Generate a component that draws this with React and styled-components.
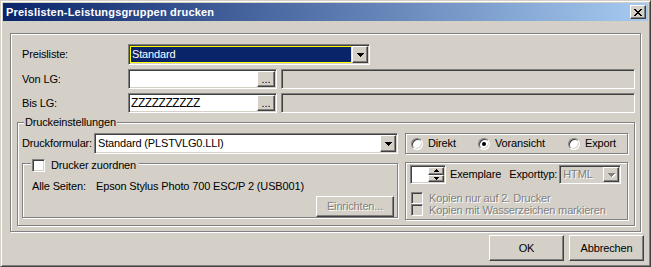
import React from "react";
import styled, { css, createGlobalStyle } from "styled-components";

const face = "#d4d0c8";

const GlobalStyle = createGlobalStyle`
  html, body { margin: 0; padding: 0; background: ${face}; }
  * { box-sizing: border-box; }
`;

// win2000 bevels
const sunken = css`
  border: 1px solid;
  border-color: #808080 #fff #fff #808080;
  box-shadow: inset 1px 1px #404040, inset -1px -1px ${face};
`;
const raised = css`
  border: 1px solid;
  border-color: #fff #404040 #404040 #fff;
  box-shadow: inset -1px -1px #808080, inset 1px 1px ${face};
`;
const etched = css`
  border: 1px solid #808080;
  box-shadow: inset 1px 1px #fff, 1px 1px #fff;
`;
const disabledText = css`
  color: #808080;
  text-shadow: 1px 1px 0 #fff;
`;

const Window = styled.div`
  width: 651px;
  height: 267px;
  display: flex;
  flex-direction: column;
  background: ${face};
  border: 1px solid;
  border-color: ${face} #404040 #404040 ${face};
  box-shadow: inset 1px 1px #fff, inset -1px -1px #808080;
  padding: 2px;
  font-family: "Liberation Sans", Arial, sans-serif;
  font-size: 11px;
  line-height: 13px;
  letter-spacing: -0.15px;
  color: #000;
`;

const TitleBar = styled.div`
  height: 18px;
  display: flex;
  align-items: center;
  justify-content: space-between;
  padding: 0 2px 0 3px;
  background: linear-gradient(90deg, #0a246a, #a6caf0);
`;

const Title = styled.span`
  color: #fff;
  font-weight: bold;
  letter-spacing: 0.2px;
`;

const CloseButton = styled.div`
  ${raised};
  width: 16px;
  height: 14px;
  display: flex;
  align-items: center;
  justify-content: center;
  background: ${face};
`;

const Client = styled.div`
  flex: 1;
  display: flex;
  flex-direction: column;
  padding: 12px 7px 3px 7px;
  min-height: 0;
`;

const OuterGroup = styled.div`
  ${etched};
  flex: 1;
  display: flex;
  flex-direction: column;
  padding: 10px 5px 5px 6px;
`;

const FieldRow = styled.div`
  display: flex;
  align-items: center;
  height: ${(p) => p.$h}px;
  padding-left: 5px;
  margin-bottom: 4px;
`;

const FieldLabel = styled.span`
  width: ${(p) => p.$w}px;
  flex-shrink: 0;
  white-space: nowrap;
`;

const Combo = styled.div`
  ${sunken};
  display: flex;
  width: ${(p) => p.$w}px;
  height: ${(p) => p.$h || 21}px;
  margin-left: ${(p) => p.$ml || 0}px;
  padding: 1px;
  background: ${(p) => (p.$disabled ? face : "#fff")};
  flex-shrink: 0;
`;

const ComboValue = styled.div`
  flex: 1;
  min-width: 0;
  display: flex;
  align-items: center;
  padding-left: 2px;
  white-space: nowrap;
  overflow: hidden;
  ${(p) =>
    p.$selected &&
    css`
      background: #0a246a;
      color: #fff;
      border: 1px solid #ffff00;
      padding-left: 1px;
    `}
  ${(p) => p.$disabled && disabledText}
`;

const DropButton = styled.div`
  ${raised};
  width: 16px;
  flex-shrink: 0;
  display: flex;
  align-items: center;
  justify-content: center;
  background: ${face};
  svg {
    ${(p) => p.$disabled && "filter: drop-shadow(1px 1px 0 #fff);"}
  }
`;

const TextInput = styled.div`
  ${sunken};
  display: flex;
  width: 149px;
  height: 20px;
  padding: 1px;
  background: #fff;
  flex-shrink: 0;
`;

const InputText = styled.div`
  flex: 1;
  display: flex;
  align-items: center;
  padding-left: 1px;
  overflow: hidden;
`;

const Hatch = styled.span`
  font-size: 12px;
  letter-spacing: -0.45px;
`;

const DotsButton = styled.div`
  ${raised};
  width: 18px;
  background: ${face};
  display: flex;
  align-items: flex-end;
  justify-content: center;
  padding-bottom: 2px;
  line-height: 9px;
  letter-spacing: 0;
`;

const DisabledField = styled.div`
  ${sunken};
  flex: 1;
  height: 20px;
  margin-left: 4px;
  background: ${face};
`;

const GroupBox = styled.div`
  ${etched};
  position: relative;
  margin-top: 5px;
  padding: 10px 6px 5px 4px;
`;

const Legend = styled.span`
  position: absolute;
  top: ${(p) => p.$top}px;
  left: ${(p) => p.$left}px;
  padding: 0 ${(p) => p.$pr || 1}px 0 1px;
  background: ${face};
  display: flex;
  align-items: center;
  gap: 6px;
  white-space: nowrap;
`;

const SettingsGrid = styled.div`
  display: grid;
  grid-template-columns: 376px 223px;
  grid-template-rows: 21px 58px;
  column-gap: 7px;
  row-gap: 8px;
`;

const FormRow = styled.div`
  display: flex;
  align-items: center;
`;

const RadioBox = styled.div`
  ${etched};
  display: flex;
  align-items: center;
  padding-left: 5px;
`;

const RadioItem = styled.label`
  display: flex;
  align-items: center;
  gap: 5px;
  width: ${(p) => (p.$w ? `${p.$w}px` : "auto")};
`;

const RadioCircle = styled.span`
  width: 12px;
  height: 12px;
  border-radius: 50%;
  border: 1px solid;
  border-color: #808080 #fff #fff #808080;
  box-shadow: inset 1px 1px #404040, inset -1px -1px ${face};
  background: #fff;
  position: relative;
  flex-shrink: 0;
  ${(p) =>
    p.$checked &&
    css`
      &::after {
        content: "";
        position: absolute;
        left: 3px;
        top: 3px;
        width: 4px;
        height: 4px;
        border-radius: 50%;
        background: #000;
      }
    `}
`;

const CheckBox = styled.span`
  ${sunken};
  width: ${(p) => p.$size || 13}px;
  height: ${(p) => p.$size || 13}px;
  flex-shrink: 0;
  background: ${(p) => (p.$disabled ? face : "#fff")};
`;

const PrinterGroup = styled.div`
  ${etched};
  position: relative;
  margin-top: 1px;
  height: 55px;
  padding: 16px 3px 0 9px;
  display: flex;
  flex-direction: column;
`;

const PrinterLine = styled.div`
  display: flex;
  white-space: nowrap;
`;

const ButtonLine = styled.div`
  display: flex;
  justify-content: flex-end;
  margin-top: 3px;
`;

const SmallButton = styled.div`
  ${raised};
  width: 78px;
  height: 21px;
  display: flex;
  align-items: center;
  justify-content: center;
  background: ${face};
  ${(p) => p.$disabled && disabledText}
`;

const OptionsGroup = styled.div`
  ${etched};
  display: flex;
  flex-direction: column;
  padding: 2px 4px 0 4px;
`;

const OptionsLine = styled.div`
  display: flex;
  align-items: center;
  white-space: nowrap;
`;

const Spinner = styled.div`
  ${sunken};
  width: 36px;
  height: 19px;
  padding: 1px;
  display: flex;
  background: #fff;
  flex-shrink: 0;
`;

const SpinField = styled.div`
  flex: 1;
`;

const SpinButtons = styled.div`
  width: 16px;
  display: flex;
  flex-direction: column;
`;

const SpinHalf = styled.div`
  ${raised};
  flex: 1;
  background: ${face};
  display: flex;
  align-items: center;
  justify-content: center;
`;

const Text = styled.span`
  margin-left: ${(p) => p.$ml || 0}px;
  ${(p) => p.$disabled && disabledText}
`;

const CheckRow = styled.div`
  display: flex;
  align-items: center;
  gap: 6px;
  height: 12px;
  margin-left: 1px;
  margin-top: ${(p) => p.$mt || 0}px;
  white-space: nowrap;
`;

const BottomBar = styled.div`
  display: flex;
  justify-content: flex-end;
  gap: 5px;
  margin-top: 3px;
  margin-right: -3px;
`;

const DialogButton = styled.div`
  ${raised};
  width: 75px;
  height: 26px;
  display: flex;
  align-items: center;
  justify-content: center;
  background: ${face};
`;

function Arrow({ color = "#000" }) {
  return (
    <svg width="7" height="4" viewBox="0 0 7 4" shapeRendering="crispEdges">
      <polygon points="0,0 7,0 3.5,4" fill={color} />
    </svg>
  );
}

function SpinArrow({ up }) {
  return (
    <svg width="5" height="3" viewBox="0 0 5 3" shapeRendering="crispEdges">
      <polygon points={up ? "2.5,0 5,3 0,3" : "0,0 5,0 2.5,3"} fill="#000" />
    </svg>
  );
}

export default function App() {
  return (
    <>
      <GlobalStyle />
      <Window>
        <TitleBar>
          <Title>Preislisten-Leistungsgruppen drucken</Title>
          <CloseButton>
            <svg width="8" height="7" viewBox="0 0 8 7" shapeRendering="crispEdges">
              <path d="M0 0H2L4 2.5L6 0H8L5 3.5L8 7H6L4 4.5L2 7H0L3 3.5Z" fill="#000" />
            </svg>
          </CloseButton>
        </TitleBar>

        <Client>
          <OuterGroup>
            <FieldRow $h={21}>
              <FieldLabel $w={106}>Preisliste:</FieldLabel>
              <Combo $w={242}>
                <ComboValue $selected>Standard</ComboValue>
                <DropButton>
                  <Arrow />
                </DropButton>
              </Combo>
            </FieldRow>

            <FieldRow $h={20}>
              <FieldLabel $w={106}>Von LG:</FieldLabel>
              <TextInput>
                <InputText />
                <DotsButton>...</DotsButton>
              </TextInput>
              <DisabledField />
            </FieldRow>

            <FieldRow $h={20}>
              <FieldLabel $w={106}>Bis LG:</FieldLabel>
              <TextInput>
                <InputText>
                  <Hatch>ZZZZZZZZZZ</Hatch>
                </InputText>
                <DotsButton>...</DotsButton>
              </TextInput>
              <DisabledField />
            </FieldRow>

            <GroupBox>
              <Legend $top={-7} $left={6}>Druckeinstellungen</Legend>
              <SettingsGrid>
                <FormRow>
                  <FieldLabel $w={72}>Druckformular:</FieldLabel>
                  <Combo $w={304}>
                    <ComboValue>Standard (PLSTVLG0.LLI)</ComboValue>
                    <DropButton>
                      <Arrow />
                    </DropButton>
                  </Combo>
                </FormRow>

                <RadioBox>
                  <RadioItem $w={67}>
                    <RadioCircle />
                    Direkt
                  </RadioItem>
                  <RadioItem $w={90}>
                    <RadioCircle $checked />
                    Voransicht
                  </RadioItem>
                  <RadioItem>
                    <RadioCircle />
                    Export
                  </RadioItem>
                </RadioBox>

                <PrinterGroup>
                  <Legend $top={-5} $left={8} $pr={3}>
                    <CheckBox />
                    Drucker zuordnen
                  </Legend>
                  <PrinterLine>
                    <FieldLabel $w={64}>Alle Seiten:</FieldLabel>
                    <span>Epson Stylus Photo 700 ESC/P 2 (USB001)</span>
                  </PrinterLine>
                  <ButtonLine>
                    <SmallButton $disabled>Einrichten...</SmallButton>
                  </ButtonLine>
                </PrinterGroup>

                <OptionsGroup>
                  <OptionsLine>
                    <Spinner>
                      <SpinField />
                      <SpinButtons>
                        <SpinHalf>
                          <SpinArrow up />
                        </SpinHalf>
                        <SpinHalf>
                          <SpinArrow />
                        </SpinHalf>
                      </SpinButtons>
                    </Spinner>
                    <Text $ml={4}>Exemplare</Text>
                    <Text $ml={8}>Exporttyp:</Text>
                    <Combo $w={62} $h={19} $ml={2} $disabled>
                      <ComboValue $disabled>HTML</ComboValue>
                      <DropButton $disabled>
                        <Arrow color="#808080" />
                      </DropButton>
                    </Combo>
                  </OptionsLine>
                  <CheckRow $mt={8}>
                    <CheckBox $size={12} $disabled />
                    <Text $disabled>Kopien nur auf 2. Drucker</Text>
                  </CheckRow>
                  <CheckRow>
                    <CheckBox $size={12} $disabled />
                    <Text $disabled>Kopien mit Wasserzeichen markieren</Text>
                  </CheckRow>
                </OptionsGroup>
              </SettingsGrid>
            </GroupBox>
          </OuterGroup>

          <BottomBar>
            <DialogButton>OK</DialogButton>
            <DialogButton>Abbrechen</DialogButton>
          </BottomBar>
        </Client>
      </Window>
    </>
  );
}
